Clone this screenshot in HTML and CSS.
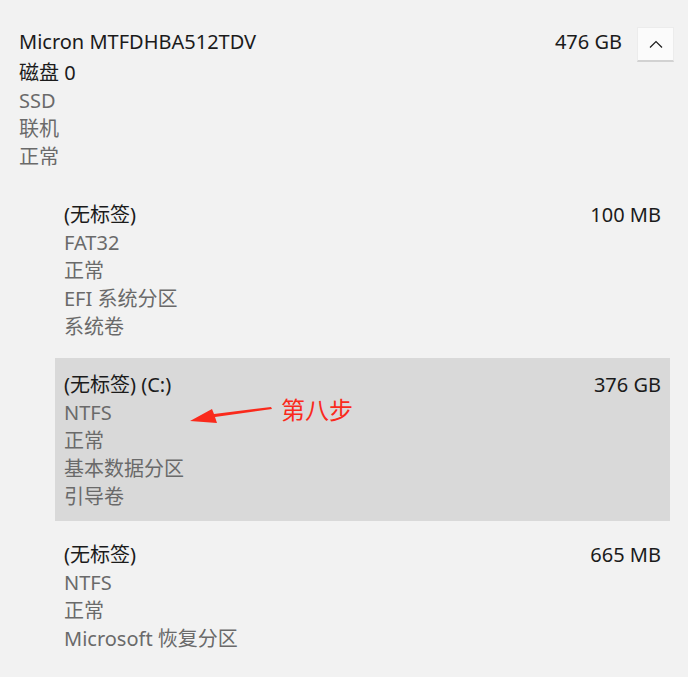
FILE: index.html
```html
<!DOCTYPE html>
<html lang="zh-CN">
<head>
  <meta charset="UTF-8">
  <meta name="viewport" content="width=device-width, initial-scale=1.0">
  <title>磁盘 0</title>
  <link rel="stylesheet" href="styles.css">
</head>
<body>
  <div class="disk">
    <!-- Disk header -->
    <div class="disk-head">
      <div class="info">
        <div class="title">Micron MTFDHBA512TDV</div>
        <div class="name">磁盘 0</div>
        <div class="sub">SSD</div>
        <div class="sub">联机</div>
        <div class="sub">正常</div>
      </div>
      <div class="size">476 GB</div>
      <button class="collapse" aria-label="折叠">
        <svg width="14" height="8" viewBox="0 0 14 8"><path d="M1 7.5 L7 1.5 L13 7.5" fill="none" stroke="#1b1b1b" stroke-width="1.2"/></svg>
      </button>
    </div>

    <!-- Partitions -->
    <div class="partitions">
      <div class="partition">
        <div class="info">
          <div class="name">(无标签)</div>
          <div class="sub">FAT32</div>
          <div class="sub">正常</div>
          <div class="sub">EFI 系统分区</div>
          <div class="sub">系统卷</div>
        </div>
        <div class="size">100 MB</div>
      </div>

      <div class="partition selected">
        <div class="info">
          <div class="name">(无标签) (C:)</div>
          <div class="sub">NTFS</div>
          <div class="sub">正常</div>
          <div class="sub">基本数据分区</div>
          <div class="sub">引导卷</div>
        </div>
        <div class="size">376 GB</div>
        <div class="note">
          <svg class="arrow" width="84" height="22" viewBox="0 0 84 22"><path d="M82 3 L83 5 L26 13 L28 19 L1 17 L23 5 L25 10 Z" fill="#fa2a1c"/></svg>
          <span>第八步</span>
        </div>
      </div>

      <div class="partition">
        <div class="info">
          <div class="name">(无标签)</div>
          <div class="sub">NTFS</div>
          <div class="sub">正常</div>
          <div class="sub">Microsoft 恢复分区</div>
        </div>
        <div class="size">665 MB</div>
      </div>
    </div>
  </div>
</body>
</html>
```

FILE: styles.css
```css
:root {
  --bg: #f2f2f2;
  --text: #1b1b1b;
  --muted: #6a6a6a;
  --selected: #d9d9d9;
  --red: #fa2a1c;
}

body {
  margin: 0;
  background-color: var(--bg);
  color: var(--text);
  font-family: 'Noto Sans', 'Noto Sans CJK SC', sans-serif;
  font-size: 20px;
  line-height: 28px;
}

.disk {
  padding: 26px 14px 20px 19px;
}

.disk-head {
  display: flex;
  align-items: flex-start;
}

.disk-head .info {
  flex: 1;
}

.title {
  line-height: 31px;
  margin-bottom: 2px;
}

.sub {
  color: var(--muted);
}

.size {
  line-height: 31px;
}

.collapse {
  width: 37px;
  height: 35px;
  margin-left: 15px;
  margin-top: 1px;
  padding: 0;
  background-color: #fbfbfb;
  border: 1px solid #ececec;
  border-bottom: 2px solid #d2d2d2;
  display: flex;
  align-items: center;
  justify-content: center;
}

.partitions {
  margin: 17px 4px 0 36px;
  display: flex;
  flex-direction: column;
  gap: 7px;
}

.partition {
  position: relative;
  display: flex;
  align-items: flex-start;
  padding: 13px 9px 10px 9px;
}

.partition .info {
  flex: 1;
}

.partition .size {
  line-height: 28px;
}

.selected {
  background-color: var(--selected);
}

.note {
  position: absolute;
  left: 134px;
  top: 38px;
  display: flex;
  align-items: flex-start;
  gap: 8px;
  color: var(--red);
  font-size: 24px;
  line-height: 28px;
}

.arrow {
  margin-top: 8px;
}
```
